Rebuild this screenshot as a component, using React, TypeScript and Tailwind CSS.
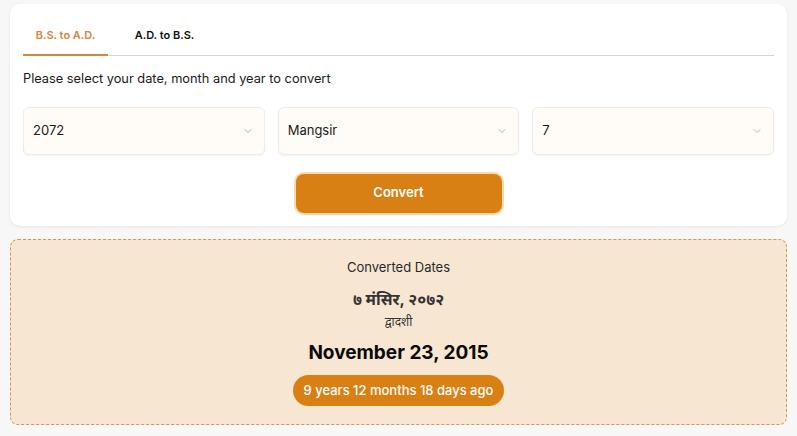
import React from "react";

function Chevron() {
  return (
    <svg width="12" height="12" viewBox="0 0 24 24" fill="none" stroke="#b8b8b8" strokeWidth="2" strokeLinecap="round" strokeLinejoin="round">
      <path d="m6 9 6 6 6-6" />
    </svg>
  );
}

function SelectBox({ value }: { value: string }) {
  return (
    <div className="flex h-[48px] items-center justify-between rounded-[6px] border border-[#ececec] bg-[#fffbf6] pl-[9px] pr-[10px] text-[13px] text-[#1a1a1a] shadow-[0_1px_2px_rgba(0,0,0,0.05)]">
      <span>{value}</span>
      <Chevron />
    </div>
  );
}

export default function App() {
  return (
    <div
      className="flex min-h-[436px] w-[797px] flex-col gap-[13px] bg-[#f7f7f7] px-[10px] pt-[4px] pb-[12px]"
      style={{ fontFamily: "Inter, 'Noto Sans', 'Noto Sans Devanagari', sans-serif" }}
    >
      <div className="rounded-[10px] bg-white px-[13px] pb-[13px] shadow-[0_1px_3px_rgba(0,0,0,0.08)]">
        <div className="flex border-b border-[#d4d4d4] pt-[23px]">
          <div className="-mb-px w-[85px] border-b-2 border-[#d5863a] pb-[10px] text-center text-[11px] font-semibold text-[#d5863a]">
            B.S. to A.D.
          </div>
          <div className="w-[113px] pb-[10px] text-center text-[11px] font-semibold text-[#111]">A.D. to B.S.</div>
        </div>
        <p className="mt-[13px] text-[12.8px] text-[#1a1a1a]">Please select your date, month and year to convert</p>
        <div className="mt-[19px] grid grid-cols-3 gap-[13px]">
          <SelectBox value="2072" />
          <SelectBox value="Mangsir" />
          <SelectBox value="7" />
        </div>
        <div className="mt-[19px] flex justify-center">
          <button className="h-[39px] w-[206px] rounded-[8px] bg-[#d98014] text-[13px] font-semibold text-white ring-2 ring-[#f8d9b0]">
            Convert
          </button>
        </div>
      </div>
      <div className="flex flex-col items-center rounded-[8px] border border-dashed border-[#d8974c] bg-[#f6e6d2] pt-[18px] pb-[18px]">
        <div className="text-[13px] text-[#2a2a2a]">Converted Dates</div>
        <div className="mt-[10px] text-[16px] font-bold text-[#333]">७ मंसिर, २०७२</div>
        <div className="mt-[2px] text-[12px] text-[#333]">द्वादशी</div>
        <div className="mt-[7px] text-[19px] font-bold leading-[29px] text-[#0a0a0a]">November 23, 2015</div>
        <div className="mt-[8px] rounded-full bg-[#d98014] px-[11px] py-[5.5px] text-[13px] font-medium text-white">
          9 years 12 months 18 days ago
        </div>
      </div>
    </div>
  );
}
